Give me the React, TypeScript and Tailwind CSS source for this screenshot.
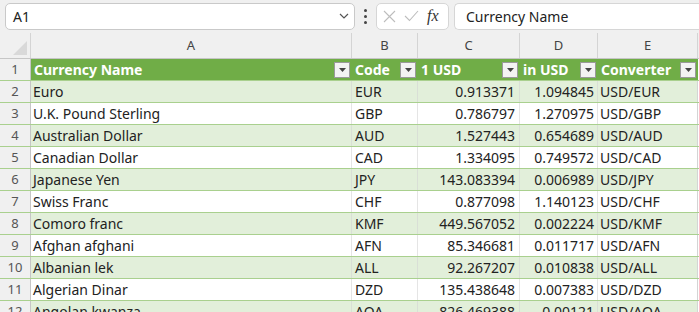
import React from 'react';

type Row = [string, string, string, string, string];

const rows: Row[] = [
  ['Euro', 'EUR', '0.913371', '1.094845', 'USD/EUR'],
  ['U.K. Pound Sterling', 'GBP', '0.786797', '1.270975', 'USD/GBP'],
  ['Australian Dollar', 'AUD', '1.527443', '0.654689', 'USD/AUD'],
  ['Canadian Dollar', 'CAD', '1.334095', '0.749572', 'USD/CAD'],
  ['Japanese Yen', 'JPY', '143.083394', '0.006989', 'USD/JPY'],
  ['Swiss Franc', 'CHF', '0.877098', '1.140123', 'USD/CHF'],
  ['Comoro franc', 'KMF', '449.567052', '0.002224', 'USD/KMF'],
  ['Afghan afghani', 'AFN', '85.346681', '0.011717', 'USD/AFN'],
  ['Albanian lek', 'ALL', '92.267207', '0.010838', 'USD/ALL'],
  ['Algerian Dinar', 'DZD', '135.438648', '0.007383', 'USD/DZD'],
  ['Angolan kwanza', 'AOA', '826.469388', '0.00121', 'USD/AOA'],
];

const cols = 'grid grid-cols-[31px_321px_66px_102px_78px_100px_1fr]';

const FilterBtn = () => (
  <span className="w-4 h-4 bg-[#f3f3f3] border border-[#9a9a9a] flex items-center justify-center shrink-0">
    <svg width="7" height="4" viewBox="0 0 7 4">
      <path d="M0 0h7L3.5 4z" fill="#444" />
    </svg>
  </span>
);

const HeadCell = ({ label }: { label: string }) => (
  <div className="flex items-center justify-between pl-[3px] pr-[1px] border-r border-[#a9d08e]/0 h-[21px]">
    <span className="font-bold text-white">{label}</span>
    <FilterBtn />
  </div>
);

export default function App() {
  return (
    <div className="w-[699px] h-[312px] overflow-hidden bg-[#f0f0f0] font-['Noto_Sans',sans-serif] text-[#222]">
      {/* formula bar */}
      <div className="h-[33px] flex items-center pl-[5px] pb-[1px]">
        <div className="w-[350px] h-[27px] bg-white border border-[#c9c9c9] rounded-[5px] flex items-center justify-between pl-[7px] pr-[5px] text-[14px]">
          <span>A1</span>
          <svg width="10" height="6" viewBox="0 0 10 6">
            <path d="M1 1l4 4 4-4" fill="none" stroke="#555" strokeWidth="1.2" />
          </svg>
        </div>
        <div className="w-[21px] flex flex-col items-center gap-[3px]">
          <span className="w-[3px] h-[3px] rounded-full bg-[#444]" />
          <span className="w-[3px] h-[3px] rounded-full bg-[#444]" />
          <span className="w-[3px] h-[3px] rounded-full bg-[#444]" />
        </div>
        <div className="w-[73px] h-[27px] bg-white border border-[#d6d6d6] rounded-[5px] flex items-center pl-[6px] gap-[8px]">
          <svg width="13" height="13" viewBox="0 0 13 13">
            <path d="M1 1l11 11M12 1L1 12" stroke="#bdbdbd" strokeWidth="1.1" />
          </svg>
          <svg width="15" height="12" viewBox="0 0 15 12">
            <path d="M1 6l4.5 4.5L14 1" fill="none" stroke="#bdbdbd" strokeWidth="1.1" />
          </svg>
          <span className="font-['Liberation_Serif',serif] italic text-[16px] text-[#333] leading-none">fx</span>
        </div>
        <div className="ml-[5px] flex-1 h-[27px] bg-white border border-[#d6d6d6] rounded-l-[5px] border-r-0 flex items-center pl-[11px] text-[14px]">
          Currency Name
        </div>
      </div>

      {/* column headers */}
      <div className={`${cols} h-[26px] text-[13px] text-[#444] border-b border-[#c6c6c6]`}>
        <div className="relative border-r border-[#d4d4d4]">
          <svg className="absolute right-[3px] bottom-[3px]" width="14" height="14" viewBox="0 0 14 14">
            <path d="M14 0v14H0z" fill="#d9d9d9" />
          </svg>
        </div>
        {['A', 'B', 'C', 'D', 'E'].map((c) => (
          <div key={c} className="flex items-center justify-center border-r border-[#d4d4d4] pt-[1px]">
            {c}
          </div>
        ))}
        <div />
      </div>

      {/* table */}
      <div className="text-[14px]">
        <div className={`${cols} h-[22px] border-b border-[#a9d08e]`}>
          <div className="flex items-center justify-center text-[13px] text-[#555] border-r border-[#c6c6c6]">1</div>
          <div className="col-span-5 grid grid-cols-[321px_66px_102px_78px_100px] bg-[#70ad47]">
            {['Currency Name', 'Code', '1 USD', 'in USD', 'Converter'].map((h) => (
              <HeadCell key={h} label={h} />
            ))}
          </div>
          <div className="bg-white" />
        </div>
        {rows.map((r, i) => {
          const band = i % 2 === 0 ? 'bg-[#e2efda]' : 'bg-white';
          return (
            <div key={i} className={`${cols} h-[22px] border-b border-[#a9d08e]`}>
              <div className="flex items-center justify-center text-[13px] text-[#555] bg-[#f0f0f0] border-r border-[#c6c6c6]">
                {i + 2}
              </div>
              <div className={`${band} flex items-center pl-[2px] border-r border-[#d4d4d4]/60 whitespace-nowrap overflow-hidden`}>{r[0]}</div>
              <div className={`${band} flex items-center pl-[3px] border-r border-[#d4d4d4]/60`}>{r[1]}</div>
              <div className={`${band} flex items-center justify-end pr-[4px] border-r border-[#d4d4d4]/60`}>{r[2]}</div>
              <div className={`${band} flex items-center justify-end pr-[3px] border-r border-[#d4d4d4]/60`}>{r[3]}</div>
              <div className={`${band} flex items-center pl-[2px] border-r border-[#d4d4d4]`}>{r[4]}</div>
              <div className="bg-white" />
            </div>
          );
        })}
      </div>
    </div>
  );
}
